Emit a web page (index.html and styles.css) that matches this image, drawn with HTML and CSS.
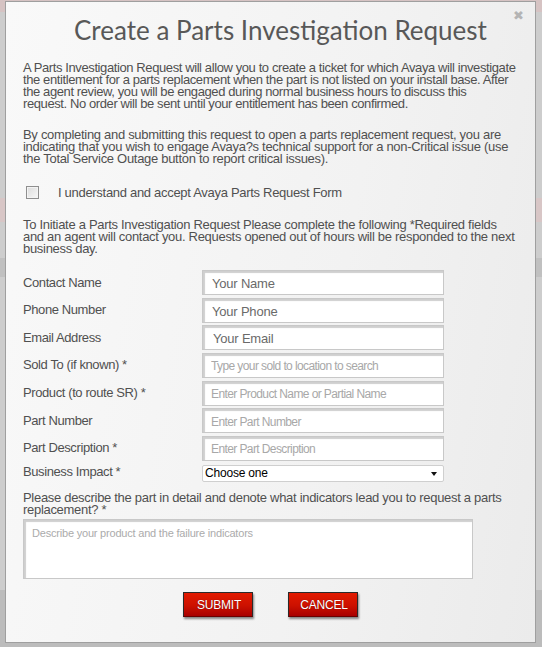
FILE: index.html
```html
<!DOCTYPE html>
<html lang="en">
<head>
<meta charset="utf-8">
<title>Create a Parts Investigation Request</title>
<link rel="stylesheet" href="styles.css">
</head>
<body>
<div class="modal">
  <span class="close">&#x2716;</span>
  <h1 class="title">Create a Parts Investigation Request</h1>
  <p class="para p1">A Parts Investigation Request will allow you to create a ticket for which Avaya will investigate the entitlement for a parts replacement when the part is not listed on your install base. After the agent review, you will be engaged during normal business hours to discuss this<br>request. No order will be sent until your entitlement has been confirmed.</p>
  <p class="para p2">By completing and submitting this request to open a parts replacement request, you are indicating that you wish to engage Avaya?s technical support for a non-Critical issue (use the Total Service Outage button to report critical issues).</p>
  <label class="agree"><input type="checkbox" class="check"><span class="agree-text">I understand and accept Avaya Parts Request Form</span></label>
  <p class="para p3">To Initiate a Parts Investigation Request Please complete the following *Required fields and an agent will contact you. Requests opened out of hours will be responded to the next business day.</p>
  <div class="form">
    <span class="lbl">Contact Name</span><input class="field big" type="text" placeholder="Your Name">
    <span class="lbl">Phone Number</span><input class="field big" type="text" placeholder="Your Phone">
    <span class="lbl">Email Address</span><input class="field big email" type="text" placeholder="Your Email">
    <span class="lbl">Sold To (if known) *</span><input class="field small" type="text" placeholder="Type your sold to location to search">
    <span class="lbl">Product (to route SR) *</span><input class="field small" type="text" placeholder="Enter Product Name or Partial Name">
    <span class="lbl">Part Number</span><input class="field small" type="text" placeholder="Enter Part Number">
    <span class="lbl">Part Description *</span><input class="field small" type="text" placeholder="Enter Part Description">
    <span class="lbl lbl-select">Business Impact *</span>
    <div class="select-wrap"><select class="select"><option>Choose one</option><option>Low</option><option>Medium</option><option>High</option></select></div>
  </div>
  <p class="para q">Please describe the part in detail and denote what indicators lead you to request a parts replacement? *</p>
  <textarea class="desc" placeholder="Describe your product and the failure indicators"></textarea>
  <div class="actions">
    <button class="btn" type="button">SUBMIT</button>
    <button class="btn" type="button">CANCEL</button>
  </div>
</div>
</body>
</html>
```
FILE: styles.css
```css
html, body {
  margin: 0;
  padding: 0;
}
body {
  width: 542px;
  height: 647px;
  overflow: hidden;
  font-family: "Liberation Sans", Arial, sans-serif;
  background:
    linear-gradient(to bottom, transparent 0, transparent 198px, #d8c6c6 198px, #d8c6c6 222px, transparent 222px),
    linear-gradient(to bottom, #d6c3c3 0, #d6c3c3 12px, transparent 12px),
    linear-gradient(to bottom, transparent 0, transparent 258px, #c0c0c0 258px, #c0c0c0 277px, transparent 277px),
    linear-gradient(to bottom, transparent 0, transparent 590px, #bcbcbc 590px),
    #cdcdcd;
}
.modal {
  position: relative;
  box-sizing: border-box;
  margin: 1px 0 0 5px;
  width: 531px;
  height: 642px;
  padding: 0 17px 0 17px;
  border: 1px solid #9f9f9f;
  background: linear-gradient(100deg, #f9f9f9 0%, #f2f2f2 60%, #ebebeb 100%);
  color: #505050;
}
.close {
  position: absolute;
  top: 7px;
  right: 11px;
  font-size: 13px;
  line-height: 14px;
  color: #b4b4b4;
}
.title {
  margin: 12px 0 0;
  padding-left: 20px;
  font-family: Lato, "Liberation Sans", sans-serif;
  font-weight: 400;
  font-size: 26px;
  line-height: 32px;
  text-align: center;
  color: #585858;
}
.para {
  margin: 0;
  font-size: 13px;
  line-height: 12px;
  letter-spacing: -0.3px;
}
.p1 { margin-top: 16px; letter-spacing: -0.4px; }
.p2 { margin-top: 19px; }
.agree {
  display: flex;
  align-items: center;
  margin-top: 20px;
  height: 14px;
}
.check {
  appearance: none;
  -webkit-appearance: none;
  box-sizing: border-box;
  margin: 0 0 0 3px;
  width: 13px;
  height: 13px;
  border: 1px solid #8f8f8f;
  background: linear-gradient(135deg, #dcdcdc, #f8f8f8);
  box-shadow: inset 0 0 0 1px #f4f4f4;
}
.agree-text {
  margin-left: 19px;
  font-size: 13px;
  letter-spacing: -0.3px;
}
.p3 { margin-top: 20px; }
.form {
  display: grid;
  grid-template-columns: 179px 242px;
  row-gap: 2.65px;
  margin-top: 15px;
  align-items: center;
}
.lbl {
  font-size: 13px;
  line-height: 16px;
  letter-spacing: -0.4px;
}
.field {
  box-sizing: border-box;
  height: 25px;
  width: 242px;
  margin: 0;
  border: 1px solid #c8c8c8;
  box-shadow: inset 2px 2px 1px #cfcfcf;
  background: #fff;
  font-family: "Liberation Sans", Arial, sans-serif;
  padding: 2px 0 0 9px;
  outline: none;
}
.field.big { font-size: 13px; letter-spacing: -0.2px; }
.field.big::placeholder { color: #6a6a6a; }
.field.email { padding-left: 10px; }
.field.small {
  font-size: 12px;
  letter-spacing: -0.6px;
  padding-left: 8px;
}
.field.small::placeholder { color: #a8a8a8; }
.select-wrap {
  position: relative;
  width: 242px;
  height: 17px;
  margin-top: 0;
}
.select-wrap::after {
  content: "";
  position: absolute;
  right: 7px;
  top: 9px;
  border-left: 3.5px solid transparent;
  border-right: 3.5px solid transparent;
  border-top: 4px solid #111;
  pointer-events: none;
}
.select {
  appearance: none;
  -webkit-appearance: none;
  box-sizing: border-box;
  width: 242px;
  height: 17px;
  margin: 0;
  padding: 0 0 0 2px;
  border: 1px solid #cfcfcf;
  border-radius: 2px;
  background: #fff;
  font-family: "Liberation Sans", Arial, sans-serif;
  font-size: 12px;
  letter-spacing: -0.2px;
  color: #000;
  outline: none;
}
.q { margin-top: 12px; }
.desc {
  display: block;
  box-sizing: border-box;
  width: 450px;
  height: 60px;
  margin: 3px 0 0 0;
  padding: 7px 8px;
  border: 1px solid #c8c8c8;
  box-shadow: inset 2px 2px 1px #cfcfcf;
  background: #fff;
  font-family: "Liberation Sans", Arial, sans-serif;
  font-size: 11px;
  letter-spacing: -0.2px;
  resize: none;
  outline: none;
}
.desc::placeholder { color: #ababab; }
.actions {
  display: flex;
  justify-content: center;
  gap: 35px;
  margin-top: 13px;
}
.btn {
  box-sizing: border-box;
  width: 70px;
  height: 25px;
  padding: 0 0 0 2px;
  border: 1px solid #2a2a2a;
  border-bottom-color: #6a0000;
  background: linear-gradient(to bottom, #e21a00 0%, #cc1100 55%, #a80000 100%);
  box-shadow: 1px 2px 2px rgba(0, 0, 0, 0.45);
  color: #fff;
  font-family: "Liberation Sans", Arial, sans-serif;
  font-size: 12px;
  letter-spacing: -0.2px;
  text-shadow: 0 0 1px rgba(80, 0, 0, 0.8);
  text-align: center;
  cursor: pointer;
}
```
